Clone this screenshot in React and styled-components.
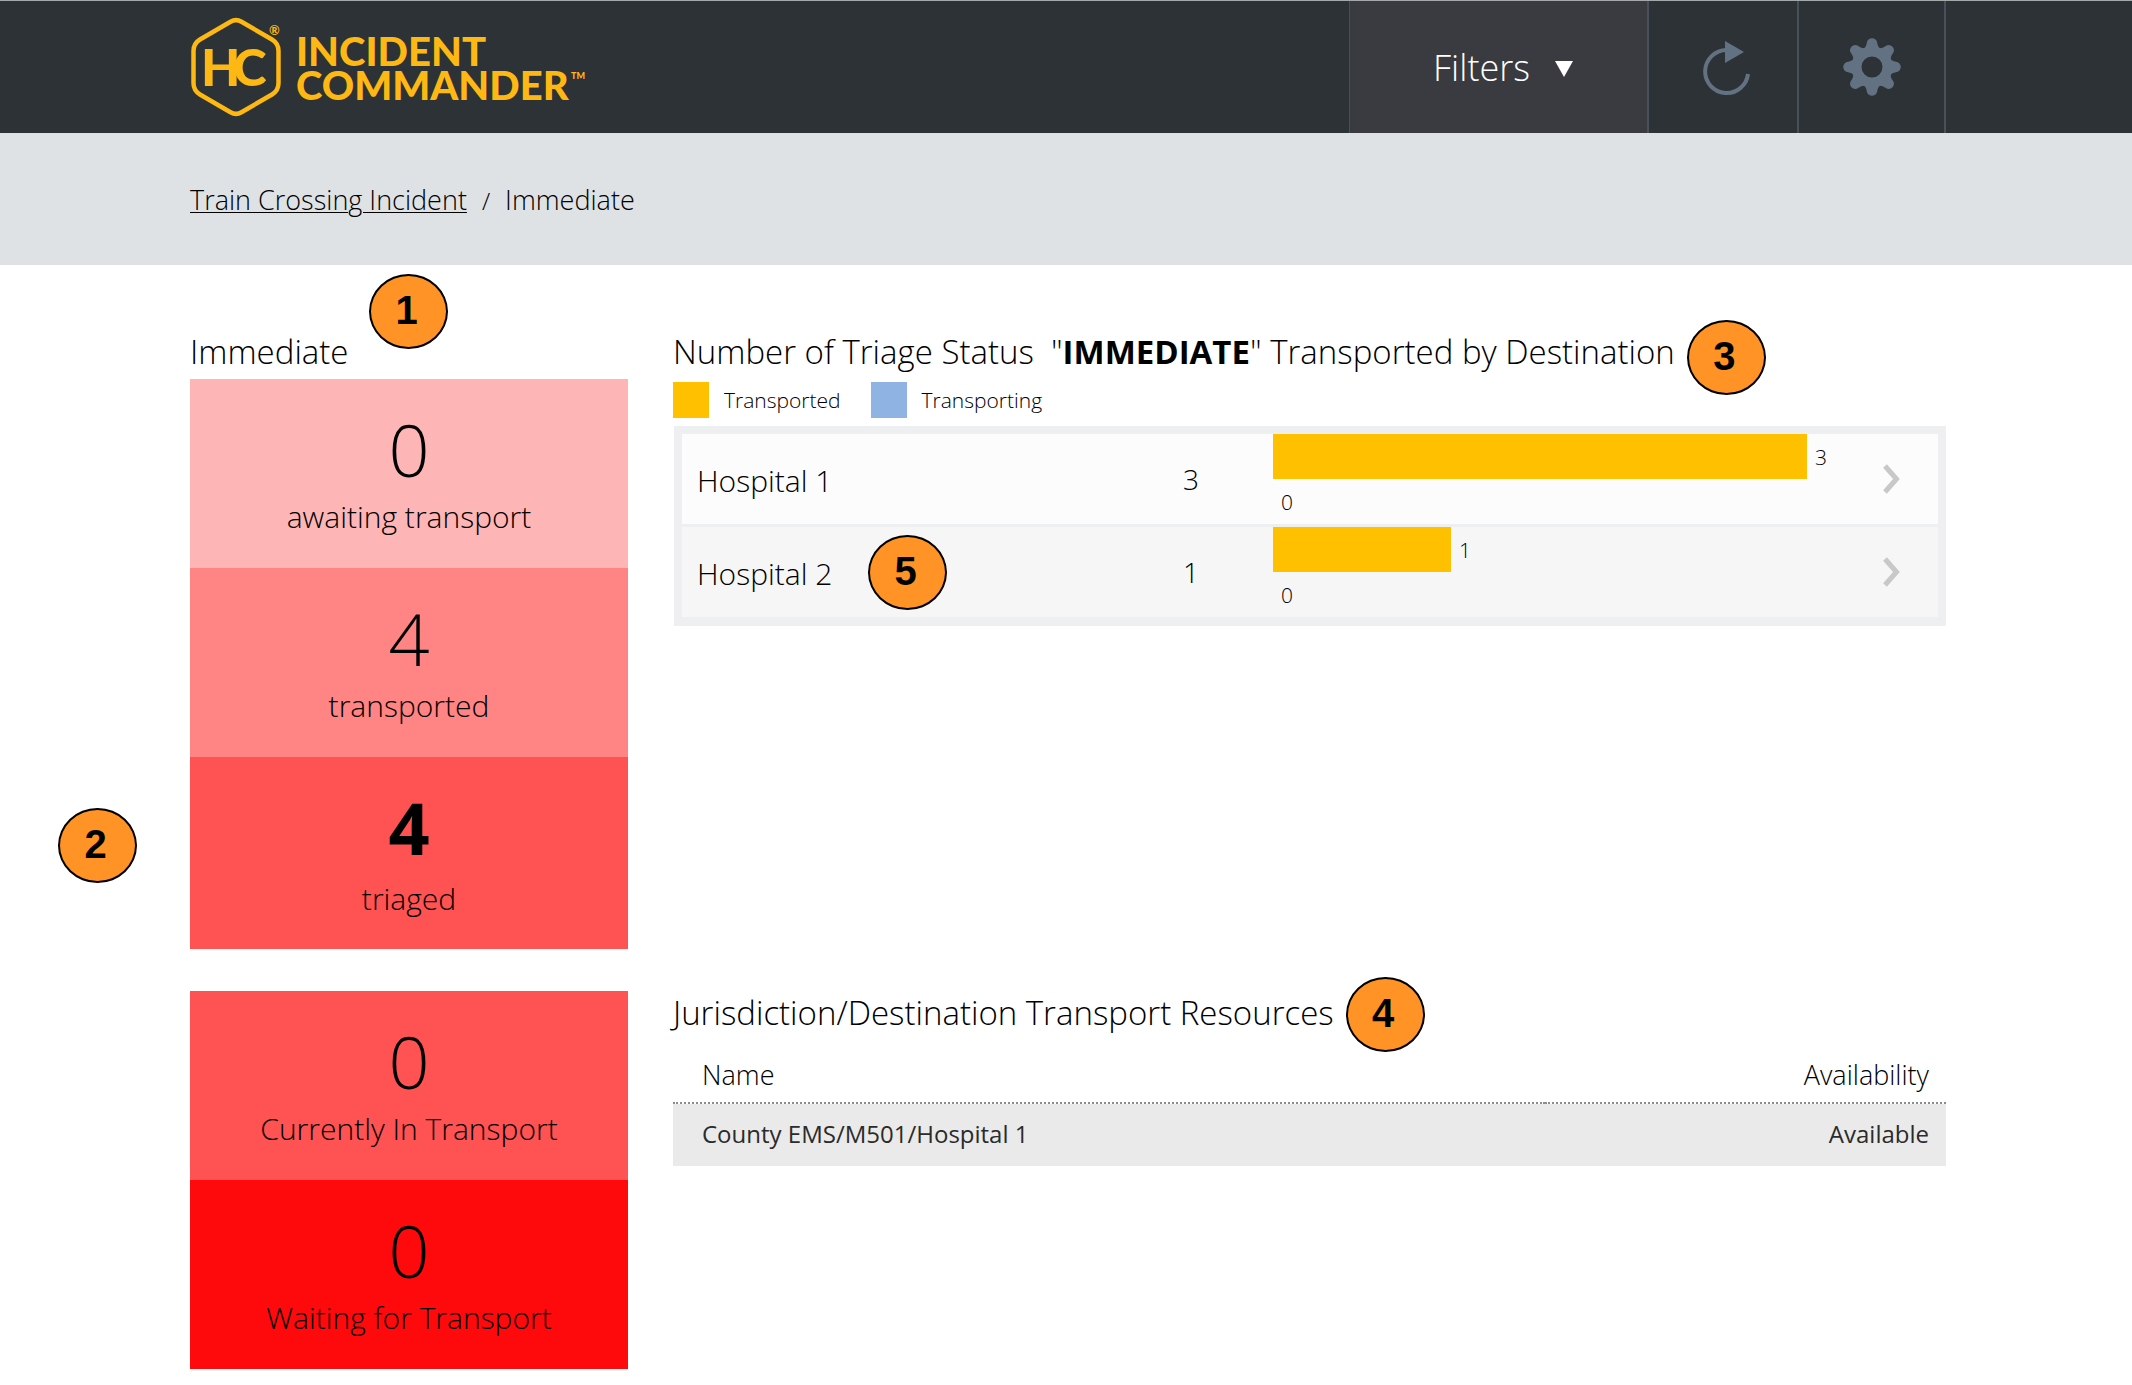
import React from "react";
import styled, { createGlobalStyle } from "styled-components";

const GlobalStyle = createGlobalStyle`
  *, *::before, *::after { box-sizing: border-box; }
  body {
    margin: 0;
    background: #fff;
    color: #000;
    font-family: "Open Sans", "Noto Sans", sans-serif;
    font-weight: 300;
  }
  h2, ul, ol, dl, dd, dt { margin: 0; padding: 0; font-weight: 300; }
  ul, ol { list-style: none; }
`;

const Header = styled.header`
  display: flex;
  justify-content: space-between;
  align-items: stretch;
  border-top: 1px solid #a3a8a8;
  background: #2d3236;
  padding: 0 186px 0 190px;
`;

const LogoLink = styled.a`
  display: flex;
  padding: 16px 0;
  color: #fdb813;
`;

const Toolbar = styled.nav`
  display: flex;
  height: 132px;
`;

const ToolButton = styled.button`
  display: flex;
  align-items: center;
  justify-content: center;
  width: ${(p) => p.$width}px;
  padding: 0;
  border: 0;
  border-right: 2px solid #47515b;
  background: transparent;
  color: #637282;
  cursor: pointer;
`;

const RefreshButton = styled(ToolButton)`
  padding: 2px 0 0 8px;
`;

const FiltersButton = styled(ToolButton)`
  gap: 25px;
  padding: 2px 0 0 9px;
  border-left: 1px solid #47515b;
  background: #393b40;
  color: #fff;
  font: 300 36px/48px "Open Sans", sans-serif;
`;

const BreadcrumbBar = styled.nav`
  background: #dee2e5;
  padding: 47px 186px 45px 190px;
`;

const Crumbs = styled.ol`
  display: flex;
  align-items: baseline;
  gap: 15px;
  font-size: 27px;
  line-height: 40px;

  a {
    color: inherit;
    text-underline-offset: 2px;
    text-decoration-thickness: 1px;
  }
`;

const Slash = styled.li`
  font-size: 24px;
  line-height: 24px;
`;

const Main = styled.main`
  position: relative;
  display: grid;
  grid-template-columns: 438px minmax(0, 1fr);
  gap: 42px 45px;
  padding: 65px 186px 17px 190px;
`;

const Panel = styled.section`
  position: relative;
`;

const Title = styled.h2`
  position: relative;
  width: fit-content;
  font-size: 33px;
  line-height: 44px;
  white-space: pre;

  strong { font-weight: 700; }
`;

const Badge = styled.span`
  position: absolute;
  left: ${(p) => p.$left};
  top: ${(p) => p.$top};
  display: flex;
  align-items: center;
  justify-content: center;
  width: 79px;
  height: 75px;
  padding: 0 4px 3px 0;
  border: 2px solid #000;
  border-radius: 50%;
  background: #ff9326;
  color: #000;
  font: 700 40px/44px "Liberation Sans", Arial, sans-serif;
`;

const Stats = styled.dl`
  margin-top: ${(p) => p.$gap || 0}px;
`;

const Stat = styled.div`
  display: flex;
  flex-direction: column-reverse;
  justify-content: flex-end;
  gap: ${(p) => (p.$total ? 12 : 8)}px;
  min-height: ${(p) => (p.$total ? 192 : 189)}px;
  padding-top: 30px;
  background: ${(p) => p.$color};
  text-align: center;
`;

const StatValue = styled.dd`
  font-size: 72px;
  line-height: 80px;
  font-weight: ${(p) => (p.$bold ? 700 : 300)};
`;

const StatLabel = styled.dt`
  font-size: 30px;
  line-height: 40px;
`;

const Legend = styled.ul`
  display: flex;
  gap: 30px;
  margin: 8px 0;
`;

const LegendItem = styled.li`
  display: flex;
  align-items: center;
  gap: 15px;
  font-size: 21px;
  line-height: 36px;

  &::before {
    content: "";
    width: 36px;
    height: 36px;
    background: ${(p) => p.$color};
  }
`;

const Destinations = styled.ul`
  margin-left: 1px;
  border: 8px solid #eeeff1;
  border-bottom-width: 9px;
`;

const Destination = styled.li`
  position: relative;
  background: #fcfcfc;

  & + & {
    border-top: 3px solid #eeeff1;
    background: #f6f6f6;
  }
`;

const DestinationLink = styled.a`
  display: grid;
  grid-template-columns: 452fr 84px 629fr 58px;
  align-items: center;
  min-height: 90px;
  padding: 0 18px 0 15px;
  color: inherit;
  text-decoration: none;
`;

const DestinationName = styled.span`
  padding-top: 4px;
  font-size: 30px;
  line-height: 40px;
`;

const Count = styled.span`
  font-size: 28px;
  line-height: 40px;
  text-align: center;
`;

const Chart = styled.span`
  display: block;
  padding: 0 55px 0 40px;
`;

const BarLine = styled.span`
  display: flex;
  align-items: center;
  gap: 8px;
  height: 45px;
  font-size: 21px;
  line-height: 28px;
`;

const Bar = styled.span`
  flex: none;
  height: 45px;
  background: ${(p) => p.$color};
`;

const ChevronCell = styled.span`
  display: flex;
  justify-content: center;
  color: #c8c8c8;
`;

const Resources = styled.table`
  width: 100%;
  margin-top: 7px;
  border-collapse: separate;
  border-spacing: 0;

  th {
    padding: 13px 17px 7px 29px;
    border-bottom: 2px dotted #8c8c8c;
    font-size: 27px;
    line-height: 40px;
    font-weight: 300;
    text-align: left;
  }
  td {
    padding: 10px 17px 12px 29px;
    background: #eaeaea;
    color: #2b2b2b;
    font-size: 24px;
    line-height: 40px;
    font-weight: 400;
  }
  th:last-child, td:last-child { text-align: right; }
`;

const TRANSPORTED = "#ffc000";
const TRANSPORTING = "#8fb3e3";

const triage = [
  { value: 0, label: "awaiting transport", color: "#feb5b6" },
  { value: 4, label: "transported", color: "#ff8483" },
  { value: 4, label: "triaged", color: "#ff5252", total: true },
];

const transport = [
  { value: 0, label: "Currently In Transport", color: "#ff5252" },
  { value: 0, label: "Waiting for Transport", color: "#ff0a0c" },
];

const destinations = [
  { name: "Hospital 1", transported: 3, transporting: 0 },
  { name: "Hospital 2", transported: 1, transporting: 0, note: 5 },
];

const MAX = Math.max(...destinations.map((d) => d.transported));

function Logo() {
  return (
    <svg width="396" height="100" viewBox="0 0 396 100" fill="currentColor" fontFamily="Lato, sans-serif" role="img" aria-label="HC Incident Commander">
      <path
        d="M40.5 4.8Q46 1.5 51.5 4.8L82 22.5Q88.5 26.5 88.5 34V66Q88.5 73.5 82 77.5L51.5 95.2Q46 98.5 40.5 95.2L10 77.5Q3.5 73.5 3.5 66V34Q3.5 26.5 10 22.5Z"
        fill="none"
        stroke="currentColor"
        strokeWidth="4.5"
      />
      <text y="69" fontSize="51" fontWeight="900">
        <tspan x="11">H</tspan>
        <tspan x="43">C</tspan>
      </text>
      <text x="79" y="18" fontSize="13" fontWeight="700">®</text>
      <text fontSize="40" fontWeight="900">
        <tspan x="106" y="49">INCIDENT</tspan>
        <tspan x="106" y="83">COMMANDER</tspan>
      </text>
      <text x="381" y="62" fontSize="9" fontWeight="900">TM</text>
    </svg>
  );
}

function RefreshIcon() {
  return (
    <svg width="48" height="54" viewBox="0 0 48 54" aria-hidden="true">
      <path d="M23.5 9A21.5 21.5 0 1 0 45 33" fill="none" stroke="currentColor" strokeWidth="4" />
      <path d="M22 0L41 11L22 22Z" fill="currentColor" />
    </svg>
  );
}

function GearIcon() {
  const tooth =
    "M-8-18.5C-6-20-5.6-22-5-25C-3.8-30 3.8-30 5-25C5.6-22 6-20 8-18.5L0-14Z";
  return (
    <svg width="58" height="58" viewBox="-29 -29 58 58" fill="currentColor" aria-hidden="true">
      <circle r="15.5" fill="none" stroke="currentColor" strokeWidth="10" />
      {[0, 45, 90, 135, 180, 225, 270, 315].map((angle) => (
        <path key={angle} d={tooth} transform={`rotate(${angle})`} />
      ))}
    </svg>
  );
}

function Caret() {
  return (
    <svg width="18" height="18" viewBox="0 0 18 18" aria-hidden="true">
      <path d="M0 2H18L9 18Z" fill="currentColor" />
    </svg>
  );
}

function Chevron() {
  return (
    <svg width="18" height="30" viewBox="0 0 18 30" aria-hidden="true">
      <path d="M3 2L14.5 15L3 28" fill="none" stroke="currentColor" strokeWidth="5" />
    </svg>
  );
}

function StatList({ items, gap }) {
  return (
    <Stats $gap={gap}>
      {items.map((s) => (
        <Stat key={s.label} $color={s.color} $total={s.total}>
          <StatLabel>{s.label}</StatLabel>
          <StatValue $bold={s.total}>{s.value}</StatValue>
        </Stat>
      ))}
    </Stats>
  );
}

function ChartLine({ value, color }) {
  return (
    <BarLine>
      <Bar $color={color} style={{ width: `${(value / MAX) * 100}%` }} />
      {value}
    </BarLine>
  );
}

export default function App() {
  return (
    <>
      <GlobalStyle />
      <Header>
        <LogoLink href="#home">
          <Logo />
        </LogoLink>
        <Toolbar aria-label="Tools">
          <FiltersButton type="button" $width={300}>
            Filters
            <Caret />
          </FiltersButton>
          <RefreshButton type="button" $width={150} aria-label="Refresh">
            <RefreshIcon />
          </RefreshButton>
          <ToolButton type="button" $width={147} aria-label="Settings">
            <GearIcon />
          </ToolButton>
        </Toolbar>
      </Header>

      <BreadcrumbBar aria-label="Breadcrumb">
        <Crumbs>
          <li><a href="#incident">Train Crossing Incident</a></li>
          <Slash>/</Slash>
          <li>Immediate</li>
        </Crumbs>
      </BreadcrumbBar>

      <Main>
        <Panel>
          <Title>Immediate</Title>
          <StatList items={triage} gap={5} />
          <Badge $left="179px" $top="-56px">1</Badge>
          <Badge $left="-132px" $top="478px">2</Badge>
        </Panel>

        <Panel>
          <Title>
            Number of Triage Status{"  "}"<strong>IMMEDIATE</strong>" Transported by Destination
            <Badge $left="calc(100% + 12px)" $top="-10px">3</Badge>
          </Title>
          <Legend>
            <LegendItem $color={TRANSPORTED}>Transported</LegendItem>
            <LegendItem $color={TRANSPORTING}>Transporting</LegendItem>
          </Legend>
          <Destinations>
            {destinations.map((d) => (
              <Destination key={d.name}>
                <DestinationLink href="#destination">
                  <DestinationName>{d.name}</DestinationName>
                  <Count>{d.transported + d.transporting}</Count>
                  <Chart>
                    <ChartLine value={d.transported} color={TRANSPORTED} />
                    <ChartLine value={d.transporting} color={TRANSPORTING} />
                  </Chart>
                  <ChevronCell><Chevron /></ChevronCell>
                </DestinationLink>
                {d.note && <Badge $left="186px" $top="8px">{d.note}</Badge>}
              </Destination>
            ))}
          </Destinations>
        </Panel>

        <Panel>
          <StatList items={transport} />
        </Panel>

        <Panel>
          <Title>
            Jurisdiction/Destination Transport Resources
            <Badge $left="calc(100% + 12px)" $top="-14px">4</Badge>
          </Title>
          <Resources>
            <thead>
              <tr>
                <th scope="col">Name</th>
                <th scope="col">Availability</th>
              </tr>
            </thead>
            <tbody>
              <tr>
                <td>County EMS/M501/Hospital 1</td>
                <td>Available</td>
              </tr>
            </tbody>
          </Resources>
        </Panel>
      </Main>
    </>
  );
}
